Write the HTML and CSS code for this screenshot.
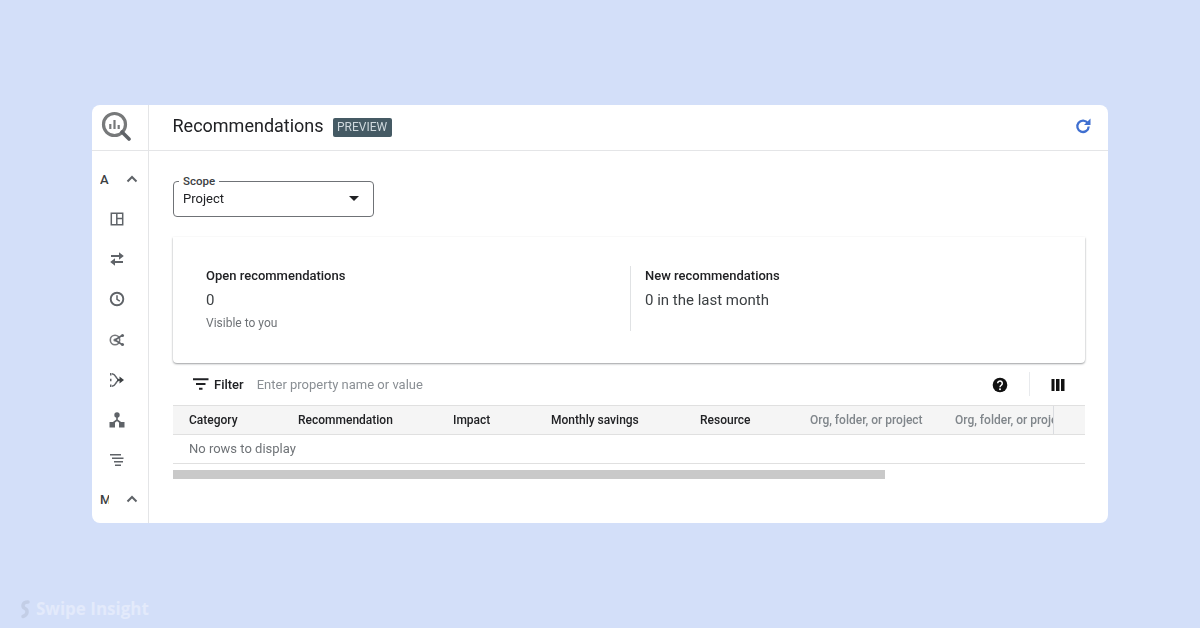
FILE: index.html
```html
<!DOCTYPE html>
<html lang="en">
<head>
<meta charset="utf-8">
<title>Recommendations</title>
<link rel="stylesheet" href="styles.css">
</head>
<body>
<div class="window">
  <aside class="rail">
    <div class="rail-logo">
      <svg class="logo" viewBox="0 0 30 30" width="30" height="30">
        <circle cx="13.500" cy="13.500" r="11" fill="none" stroke="#77797a" stroke-width="3.200"/>
        <path d="M21 21l7 7" stroke="#5f6368" stroke-width="3.600" stroke-linecap="round"/>
        <path d="M9.300 13v5M13.500 9v9M17.700 14v4" stroke="#77797a" stroke-width="2.200"/>
      </svg>
    </div>
    <div class="rail-body">
      <div class="rail-section"><span class="rail-letter">A</span><svg class="chev" viewBox="0 0 12 8" width="12" height="8"><path d="M1.500 6.500L6 2l4.500 4.500" fill="none" stroke="#5f6368" stroke-width="2"/></svg></div>
      <div class="rail-icons">
        <svg viewBox="0 0 16 16" width="16" height="16"><path d="M2.300 2.300h11.400v11.400H2.300zM7.800 2.300v11.400M7.800 7.400h5.900" fill="none" stroke="#5f6368" stroke-width="1.500"/></svg>
        <svg viewBox="0 0 16 16" width="16" height="16"><path d="M2 5h9.500M3.500 11H14" stroke="#5f6368" stroke-width="2.200"/><path d="M10 1.200L14.800 5 10 8.800zM6 7.200L1.200 11 6 14.800z" fill="#5f6368"/></svg>
        <svg viewBox="0 0 16 16" width="16" height="16"><circle cx="8" cy="8" r="6.300" fill="none" stroke="#5f6368" stroke-width="1.900"/><path d="M8 4.200v4.200l2.800 1.700" fill="none" stroke="#5f6368" stroke-width="1.500"/></svg>
        <svg viewBox="0 0 16 16" width="16" height="16"><circle cx="6" cy="8" r="4.700" fill="none" stroke="#77797c" stroke-width="1.600"/><circle cx="6" cy="8" r="1.600" fill="#77797c"/><path d="M6 8l7-4.500M6 8l7 4.500" stroke="#5f6368" stroke-width="1.600"/><circle cx="13.500" cy="3.500" r="1.500" fill="#5f6368"/><circle cx="13.500" cy="12.500" r="1.500" fill="#5f6368"/></svg>
        <svg viewBox="0 0 16 16" width="16" height="16"><path d="M3 1.800c2.800.3 3.500 2.500 4.500 4 .7 1 1.500 2.200 3 2.200-1.500 0-2.300 1.200-3 2.200-1 1.500-1.700 3.700-4.500 4" fill="none" stroke="#5f6368" stroke-width="1.500"/><path d="M1 1h1.500v2.500H1zM1 6.700h1.500v2.600H1zM1 12.500h1.500V15H1z" fill="#5f6368"/><path d="M8 8h3" stroke="#3c4043" stroke-width="1.600"/><path d="M10.500 4.500L15 8l-4.500 3.500z" fill="#3c4043"/></svg>
        <svg viewBox="0 0 16 16" width="16" height="16"><circle cx="8" cy="3" r="2.700" fill="#5f6368"/><path d="M8 5v3.500M4 11l4-3 4 3" fill="none" stroke="#5f6368" stroke-width="1.600"/><path d="M.5 10h5.500v5.500H.5zM10 10h5.500v5.500H10z" fill="#5f6368"/></svg>
        <svg viewBox="0 0 16 16" width="16" height="16"><path d="M1 2.700h11M3 6.200h11.500M5 9.700h9M6 13.200h6" stroke="#5f6368" stroke-width="1.600"/></svg>
      </div>
      <div class="rail-section rail-section-last"><span class="rail-letter rail-clip">M</span><svg class="chev" viewBox="0 0 12 8" width="12" height="8"><path d="M1.500 6.500L6 2l4.500 4.500" fill="none" stroke="#5f6368" stroke-width="2"/></svg></div>
    </div>
  </aside>
  <div class="content">
    <header class="topbar">
      <div class="title-group">
        <h1 class="title">Recommendations</h1>
        <span class="badge">PREVIEW</span>
      </div>
      <svg class="refresh" viewBox="0 0 16 16" width="16" height="16"><path d="M12.800 5.200A5.700 5.700 0 1 0 13.700 8.500" fill="none" stroke="#3f6fd0" stroke-width="2.300"/><path d="M9 7H15.500V.5z" fill="#3f6fd0"/></svg>
    </header>
    <main class="main">
      <div class="scope">
        <span class="scope-label">Scope</span>
        <span class="scope-value">Project</span>
        <span class="scope-arrow"></span>
      </div>
      <section class="summary">
        <div class="stat stat-open">
          <div class="stat-title">Open recommendations</div>
          <div class="stat-value">0</div>
          <div class="stat-note">Visible to you</div>
        </div>
        <div class="stat stat-new">
          <div class="stat-title">New recommendations</div>
          <div class="stat-value">0 in the last month</div>
        </div>
      </section>
      <div class="filter-bar">
        <svg class="filter-icon" viewBox="0 0 16 12" width="16" height="12"><path d="M0 1.200h15.500M3 6h9.500M6 10.800h3.500" stroke="#202124" stroke-width="2"/></svg>
        <span class="filter-label">Filter</span>
        <span class="filter-placeholder">Enter property name or value</span>
        <svg class="help" viewBox="0 0 16 16" width="16" height="16"><circle cx="8" cy="8" r="7.300" fill="#111"/><path d="M5.700 6.300a2.300 2.300 0 1 1 3.700 1.800c-.9.700-1.400 1-1.400 2.100" fill="none" stroke="#fff" stroke-width="1.500"/><circle cx="8" cy="12.200" r="1" fill="#fff"/></svg>
        <span class="filter-divider"></span>
        <svg class="columns" viewBox="0 0 14 12" width="14" height="12"><path d="M0.500 0h3v12h-3zM5 0h3.500v12H5zM10 0h3.500v12H10z" fill="#111"/></svg>
      </div>
      <div class="table">
        <div class="table-head">
          <div class="th th-category">Category</div>
          <div class="th th-rec">Recommendation</div>
          <div class="th th-impact">Impact</div>
          <div class="th th-savings">Monthly savings</div>
          <div class="th th-resource">Resource</div>
          <div class="th th-org muted">Org, folder, or project</div>
          <div class="th th-org2 muted">Org, folder, or project</div>
        </div>
        <div class="table-row">No rows to display</div>
      </div>
      <div class="scroll-track"><div class="scroll-thumb"></div></div>
    </main>
  </div>
</div>
<div class="watermark">
  <svg viewBox="0 0 12 20" width="12" height="20"><path d="M9 3C3 3 3 8 6 9.500 9 11 9 16 4 17.500" fill="none" stroke="#c3cee6" stroke-width="3.500" stroke-linecap="round"/></svg>
  <span>Swipe Insight</span>
</div>
</body>
</html>
```
FILE: styles.css
```css
* { box-sizing: border-box; }
html, body { height: 100%; }
body {
  margin: 0;
  padding: 105px 92px;
  background: #d3dff9;
  font-family: Roboto, "Liberation Sans", sans-serif;
  color: #202124;
  overflow: hidden;
  position: relative;
}
.window {
  display: flex;
  width: 1016px;
  height: 418px;
  background: #fff;
  border-radius: 8px;
  overflow: hidden;
  filter: blur(.35px);
}
.rail {
  width: 57px;
  flex: none;
  border-right: 1px solid #e4e5e7;
  display: flex;
  flex-direction: column;
}
.rail-logo {
  height: 46px;
  flex: none;
  border-bottom: 1px solid #e4e5e7;
  display: flex;
  align-items: center;
  padding: 0 0 4px 9px;
}
.rail-body {
  flex: 1;
  display: flex;
  flex-direction: column;
  padding-top: 18px;
}
.rail-section {
  height: 20px;
  display: flex;
  align-items: center;
  justify-content: space-between;
  padding: 0 10px 0 8px;
}
.rail-section-last { margin-top: 21px; }
.rail-letter {
  font-size: 13px;
  font-weight: 500;
  color: #3c4043;
  width: 9px;
  overflow: hidden;
}
.chev { display: block; }
.rail-icons {
  display: flex;
  flex-direction: column;
  align-items: center;
  gap: 24.200px;
  padding: 22px 7px 0 0;
}
.rail-icons svg { display: block; }
.content { flex: 1; min-width: 0; display: flex; flex-direction: column; }
.topbar {
  height: 46px;
  flex: none;
  border-bottom: 1px solid #e4e5e7;
  display: flex;
  align-items: center;
  justify-content: space-between;
  padding: 0 17px 3px 23.500px;
}
.title-group { display: flex; align-items: center; gap: 9px; }
.title {
  margin: 0;
  font-size: 18px;
  font-weight: 400;
  line-height: 24px;
  color: #202124;
}
.badge {
  background: #455a64;
  color: #cfd8dd;
  border-radius: 2px;
  font-size: 12px;
  line-height: 19px;
  height: 19px;
  width: 59px;
  text-align: center;
  margin-top: 2px;
}
.main { flex: 1; padding: 30px 23px 0 24px; }
.scope {
  position: relative;
  width: 200.500px;
  height: 36px;
  border: 1px solid #6f7276;
  border-radius: 4px;
  display: flex;
  align-items: center;
  justify-content: space-between;
  padding: 0 14px 2px 9px;
}
.scope-label {
  position: absolute;
  left: 5px;
  top: -8px;
  padding: 0 4px;
  background: #fff;
  font-size: 11.500px;
  line-height: 14px;
  font-weight: 500;
  color: #3c4043;
}
.scope-value { font-size: 13px; color: #202124; }
.scope-arrow {
  width: 0;
  height: 0;
  border-left: 5.500px solid transparent;
  border-right: 5.500px solid transparent;
  border-top: 5.500px solid #202124;
}
.summary {
  margin-top: 20px;
  height: 126px;
  display: flex;
  background: #fff;
  border-radius: 0 0 4px 4px;
  box-shadow: 0 1px 2px rgba(60, 64, 67, .5), -1px 0 2px -1px rgba(60, 64, 67, .08), 1px 0 2px -1px rgba(60, 64, 67, .08);
  padding-top: 29px;
}
.stat { height: 65px; }
.stat-open {
  width: 458px;
  padding-left: 33px;
  border-right: 1px solid #e0e2e4;
}
.stat-new { padding-left: 14px; }
.stat-title {
  font-size: 13px;
  line-height: 20px;
  font-weight: 500;
  color: #202124;
}
.stat-value {
  font-size: 15px;
  line-height: 20px;
  margin-top: 4px;
  color: #3c4043;
}
.stat-note {
  font-size: 12px;
  line-height: 16px;
  margin-top: 5px;
  color: #6f7377;
}
.filter-bar {
  height: 42px;
  display: flex;
  align-items: center;
  padding: 0 20px 0 20px;
}
.filter-icon { flex: none; }
.filter-label {
  margin-left: 5px;
  font-size: 13px;
  font-weight: 500;
  color: #202124;
}
.filter-placeholder {
  margin-left: 13px;
  font-size: 13px;
  color: #8a8f94;
  flex: 1;
}
.help { flex: none; margin: 1px 21px 0 0; }
.filter-divider {
  width: 1px;
  height: 24px;
  background: #e8eaed;
  margin-right: 21px;
}
.columns { flex: none; margin-top: 1px; }
.table { border-top: 1px solid #e0e0e0; }
.table-head {
  display: flex;
  height: 29px;
  background: #f5f5f5;
  border-bottom: 1px solid #e0e0e0;
}
.th {
  padding-left: 16px;
  font-size: 12px;
  line-height: 28px;
  font-weight: 500;
  color: #202124;
  white-space: nowrap;
  overflow: hidden;
  flex: none;
}
.th-category { width: 109px; }
.th-rec { width: 155px; }
.th-impact { width: 98px; }
.th-savings { width: 149px; }
.th-resource { width: 110px; }
.th-org { width: 145px; }
.th-org2 { width: 115px; border-right: 1px solid #dadce0; }
.muted { color: #80868b; }
.table-row {
  height: 29px;
  padding-left: 16px;
  font-size: 13px;
  line-height: 28px;
  color: #6f7377;
  border-bottom: 1px solid #e0e0e0;
}
.scroll-track { margin-top: 6px; height: 9px; }
.scroll-thumb { width: 712px; height: 9px; background: #c9c9c9; }
.watermark {
  position: absolute;
  left: 19px;
  top: 599px;
  display: flex;
  align-items: center;
  gap: 5px;
  font-family: "Open Sans", sans-serif;
  font-size: 17px;
  line-height: 20px;
  font-weight: 700;
  color: #e3eafb;
}
```
